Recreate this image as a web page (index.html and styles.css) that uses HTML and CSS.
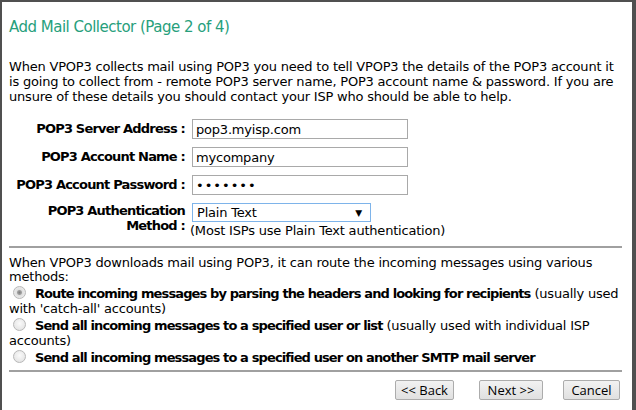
FILE: index.html
```html
<!DOCTYPE html>
<html lang="en">
<head>
  <meta charset="UTF-8">
  <title>Add Mail Collector</title>
  <link rel="stylesheet" href="styles.css">
</head>
<body>
  <div class="wizard">
    <h1>Add Mail Collector (Page 2 of 4)</h1>

    <p class="intro">When VPOP3 collects mail using POP3 you need to tell VPOP3 the details of the POP3 account it is going to collect from - remote POP3 server name, POP3 account name &amp; password. If you are unsure of these details you should contact your ISP who should be able to help.</p>

    <form id="collectorForm">
      <div class="fields">
        <label for="server">POP3 Server Address :</label>
        <div><input type="text" id="server" value="pop3.myisp.com"></div>

        <label for="account">POP3 Account Name :</label>
        <div><input type="text" id="account" value="mycompany"></div>

        <label for="password">POP3 Account Password :</label>
        <div><input type="password" id="password" value="secret1"></div>

        <label for="auth" class="multi">POP3 Authentication<br>Method :</label>
        <div>
          <div class="select" id="auth">Plain Text<span class="arrow">&#9660;</span></div>
          <div class="hint">(Most ISPs use Plain Text authentication)</div>
        </div>
      </div>

      <hr>

      <p class="routing">When VPOP3 downloads mail using POP3, it can route the incoming messages using various methods:</p>

      <div class="option">
        <span class="radio checked"></span>
        <b>Route incoming messages by parsing the headers and looking for recipients</b> (usually used with 'catch-all' accounts)
      </div>
      <div class="option">
        <span class="radio"></span>
        <b>Send all incoming messages to a specified user or list</b> (usually used with individual ISP accounts)
      </div>
      <div class="option">
        <span class="radio"></span>
        <b>Send all incoming messages to a specified user on another SMTP mail server</b>
      </div>

      <hr class="bottom">

      <div class="buttons">
        <button type="button" class="back">&lt;&lt; Back</button>
        <button type="submit" class="next">Next &gt;&gt;</button>
        <button type="button" class="cancel">Cancel</button>
      </div>
    </form>
  </div>
</body>
</html>
```

FILE: styles.css
```css
html, body {
  margin: 0;
  height: 100%;
}
body {
  font-family: "DejaVu Sans", Verdana, sans-serif;
  font-size: 13px;
  letter-spacing: -0.2px;
  color: #000;
  background-color: #505050;
  overflow: hidden;
}
b, .fields label {
  letter-spacing: -0.8px;
}
b {
  letter-spacing: -0.88px;
}
.wizard {
  box-sizing: border-box;
  height: 100%;
  margin: 2px 4px 0 2px;
  padding: 1px 10px 0 7px;
  background-color: #fff;
}
h1 {
  margin: 15px 0 0;
  font-size: 15px;
  font-weight: normal;
  letter-spacing: -0.5px;
  color: #27a07c;
}
.intro {
  margin: 23px 0 0;
  line-height: 15px;
}
.fields {
  display: grid;
  grid-template-columns: 176px 1fr;
  column-gap: 5px;
  row-gap: 8px;
  margin-top: 15px;
}
.fields label {
  font-weight: bold;
  text-align: right;
  white-space: nowrap;
  padding-top: 2px;
}
.fields label.multi {
  padding-top: 0;
  line-height: 15px;
}
input[type="text"], input[type="password"] {
  box-sizing: border-box;
  width: 216px;
  height: 20px;
  margin: 0 0 0 2px;
  padding: 1px 3px;
  border: 1px solid #a9a9a9;
  font-family: inherit;
  font-size: 13px;
  letter-spacing: -0.2px;
}
input[type="password"] {
  letter-spacing: 1px;
}
.select {
  position: relative;
  box-sizing: border-box;
  width: 179px;
  height: 19px;
  margin-left: 2px;
  padding: 1px 4px;
  border: 1px solid #7eb4ea;
  line-height: 15px;
}
.select .arrow {
  position: absolute;
  right: 8px;
  top: 2px;
  font-size: 9px;
}
.hint {
  line-height: 15px;
  margin-top: 1px;
}
hr {
  margin: 8px 0 0;
  border: none;
  border-top: 2px solid #a0a0a0;
  height: 0;
}
.routing {
  margin: 8px 0 0;
  line-height: 14px;
}
.option {
  margin-top: 2px;
  line-height: 15px;
}
.radio {
  display: inline-block;
  box-sizing: border-box;
  width: 13px;
  height: 13px;
  margin: 0 5px 0 4px;
  vertical-align: -1px;
  border: 1px solid #b8b8b8;
  border-radius: 50%;
  background: radial-gradient(circle at 50% 40%, #fafafa, #dedede);
}
.radio.checked {
  background: radial-gradient(circle, #808080 0, #a0a0a0 2px, #e0e0e0 3px, #f4f4f4);
}
hr.bottom {
  margin-top: 5px;
}
.buttons {
  display: flex;
  justify-content: flex-end;
  gap: 9px;
  margin: 8px 2px 0 0;
}
button {
  box-sizing: border-box;
  height: 20px;
  padding: 0 5px;
  font-family: "Open Sans", "DejaVu Sans", sans-serif;
  font-size: 13px;
  letter-spacing: 0;
  color: #000;
  background: linear-gradient(#f2f2f2, #e0e0e0);
  border: 1px solid #acacac;
  border-radius: 2px;
  cursor: pointer;
}
.back { width: 59px; margin-right: 16px; }
.next { width: 64px; margin-right: 11px; }
.cancel { width: 57px; }
```
